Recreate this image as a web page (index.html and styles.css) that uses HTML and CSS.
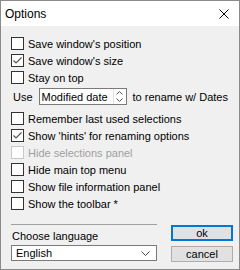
FILE: index.html
```html
<!DOCTYPE html>
<html lang="en">
  <head>
    <meta charset="UTF-8" />
    <title>Options</title>
    <link rel="stylesheet" href="styles.css">
  </head>

  <body>
    <div class="window">
      <div class="titlebar">
        <span class="title">Options</span>
        <svg class="close" width="10" height="10" viewBox="0 0 10 10">
          <path d="M0.5 0.5 L9.5 9.5 M9.5 0.5 L0.5 9.5" stroke="#000" stroke-width="1" fill="none" />
        </svg>
      </div>

      <div class="content">
        <label class="check"><span class="box"></span>Save window's position</label>
        <label class="check"><span class="box checked"><svg width="11" height="11" viewBox="0 0 11 11"><polyline points="1.5,5.5 4,8 9.5,2.5" stroke="#555" stroke-width="1.2" fill="none" /></svg></span>Save window's size</label>
        <label class="check"><span class="box"></span>Stay on top</label>

        <div class="use-row">
          <span>Use</span>
          <div class="spin">
            <span class="spin-value">Modified date</span>
            <span class="spin-arrows">
              <svg width="7" height="4" viewBox="0 0 7 4"><path d="M0.5 3.5 L3.5 0.5 L6.5 3.5" stroke="#555" fill="none" /></svg>
              <svg width="7" height="4" viewBox="0 0 7 4"><path d="M0.5 0.5 L3.5 3.5 L6.5 0.5" stroke="#555" fill="none" /></svg>
            </span>
          </div>
          <span>to rename w/ Dates</span>
        </div>

        <label class="check"><span class="box"></span>Remember last used selections</label>
        <label class="check"><span class="box checked"><svg width="11" height="11" viewBox="0 0 11 11"><polyline points="1.5,5.5 4,8 9.5,2.5" stroke="#555" stroke-width="1.2" fill="none" /></svg></span>Show 'hints' for renaming options</label>
        <label class="check disabled"><span class="box"></span>Hide selections panel</label>
        <label class="check"><span class="box"></span>Hide main top menu</label>
        <label class="check"><span class="box"></span>Show file information panel</label>
        <label class="check"><span class="box"></span>Show the toolbar *</label>

        <div class="bottom">
          <div class="lang">
            <hr class="sep" />
            <span class="lang-label">Choose language</span>
            <div class="select">
              <span>English</span>
              <svg width="9" height="5" viewBox="0 0 9 5"><path d="M0.5 0.5 L4.5 4.5 L8.5 0.5" stroke="#444" fill="none" /></svg>
            </div>
          </div>
          <div class="buttons">
            <button class="btn default">ok</button>
            <button class="btn">cancel</button>
          </div>
        </div>
      </div>
    </div>
  </body>
</html>
```

FILE: styles.css
```css
body {
  margin: 0;
  font-family: "Liberation Sans", Arial, sans-serif;
  font-size: 11px;
  color: #000;
}

.window {
  width: 240px;
  height: 270px;
  box-sizing: border-box;
  border: 1px solid #8a8a8a;
  background: #f0f0f0;
  display: flex;
  flex-direction: column;
}

.titlebar {
  height: 25px;
  background: #fff;
  display: flex;
  align-items: center;
  justify-content: space-between;
  padding: 0 10px 0 4px;
}

.title {
  font-size: 12px;
}

.close {
  margin-top: 1px;
}

.content {
  display: flex;
  flex-direction: column;
  padding: 9px 0 0 10px;
}

.check {
  display: flex;
  align-items: center;
  gap: 4px;
  height: 17px;
}

.box {
  width: 13px;
  height: 13px;
  box-sizing: border-box;
  border: 1px solid #333;
  background: #fff;
  display: flex;
  align-items: center;
  justify-content: center;
}

.check.disabled {
  color: #a0a0a0;
}

.check.disabled .box {
  border-color: #c8c8c8;
}

.use-row {
  display: flex;
  align-items: center;
  gap: 6px;
  height: 17px;
  margin: 2px 0 5px 2px;
}

.spin {
  width: 88px;
  height: 17px;
  box-sizing: border-box;
  border: 1px solid #7a7a7a;
  background: #fff;
  display: flex;
  align-items: center;
  justify-content: space-between;
  padding-left: 2px;
}

.spin-arrows {
  width: 11px;
  height: 15px;
  display: flex;
  flex-direction: column;
  align-items: center;
  justify-content: space-around;
  border-left: 1px solid #e0e0e0;
  margin-right: 1px;
}

.bottom {
  display: flex;
  justify-content: space-between;
  margin-top: 12px;
  padding-right: 6px;
}

.lang {
  width: 146px;
  display: flex;
  flex-direction: column;
}

.sep {
  margin: 0;
  border: none;
  border-top: 1px solid #a0a0a0;
  height: 0;
}

.lang-label {
  margin: 5px 0 3px 1px;
}

.select {
  height: 16px;
  box-sizing: border-box;
  border: 1px solid #7a7a7a;
  background: #fff;
  display: flex;
  align-items: center;
  justify-content: space-between;
  padding: 0 6px 0 4px;
}

.buttons {
  width: 62px;
  display: flex;
  flex-direction: column;
  gap: 5px;
  margin-top: 1px;
}

.btn {
  height: 16px;
  padding: 0;
  font-family: "Liberation Sans", Arial, sans-serif;
  font-size: 11px;
  background: #e1e1e1;
  border: 1px solid #adadad;
  color: #000;
}

.btn.default {
  border: 2px solid #0078d7;
}
```
